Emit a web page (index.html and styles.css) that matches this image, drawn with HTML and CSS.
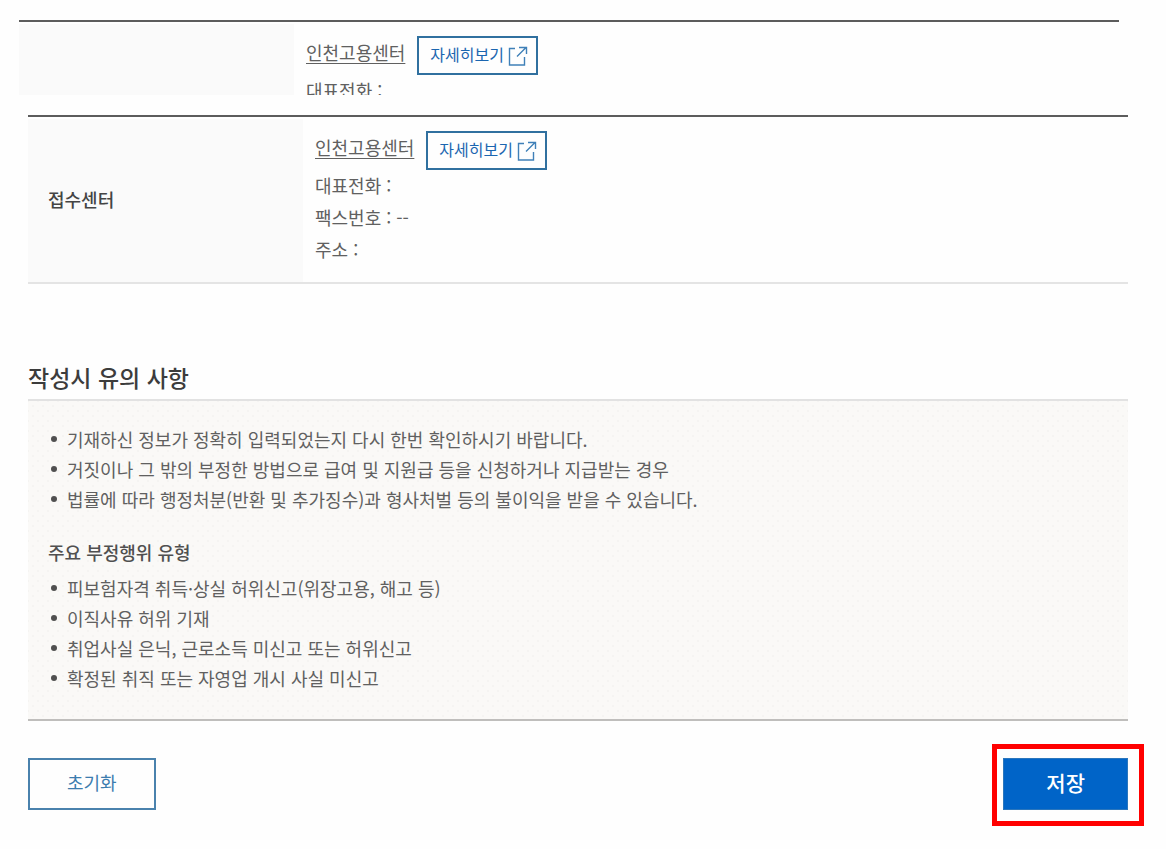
FILE: index.html
```html
<!DOCTYPE html>
<html lang="ko">
<head>
<meta charset="utf-8">
<meta name="viewport" content="width=device-width, initial-scale=1">
<title>접수센터</title>
<link rel="stylesheet" href="styles.css">
</head>
<body>
<svg class="defs" aria-hidden="true">
  <symbol id="open-icon" viewBox="0 0 20 20">
    <path d="M7 2.5H1.5V19H16.5V11" />
    <path d="M9 10.5L18 1.5M11 1.5H18.5V8" />
  </symbol>
</svg>
<div class="clip">
  <table class="info">
    <tbody>
      <tr>
        <th scope="row"></th>
        <td>
          <div class="center-row">
            <a class="center-name" href="#">인천고용센터</a>
            <button class="detail" type="button">자세히보기<svg class="icon" aria-hidden="true"><use href="#open-icon"/></svg></button>
          </div>
          <p class="line">대표전화 :</p>
        </td>
      </tr>
    </tbody>
  </table>
</div>
<main class="page">
  <table class="info full">
    <tbody>
      <tr>
        <th scope="row">접수센터</th>
        <td>
          <div class="center-row">
            <a class="center-name" href="#">인천고용센터</a>
            <button class="detail" type="button">자세히보기<svg class="icon" aria-hidden="true"><use href="#open-icon"/></svg></button>
          </div>
          <p class="line">대표전화 :</p>
          <p class="line">팩스번호 : --</p>
          <p class="line">주소 :</p>
        </td>
      </tr>
    </tbody>
  </table>
  <h2 class="title">작성시 유의 사항</h2>
  <section class="notice">
    <ul class="list">
      <li>기재하신 정보가 정확히 입력되었는지 다시 한번 확인하시기 바랍니다.</li>
      <li>거짓이나 그 밖의 부정한 방법으로 급여 및 지원급 등을 신청하거나 지급받는 경우</li>
      <li>법률에 따라 행정처분(반환 및 추가징수)과 형사처벌 등의 불이익을 받을 수 있습니다.</li>
    </ul>
    <h3 class="subtitle">주요 부정행위 유형</h3>
    <ul class="list">
      <li>피보험자격 취득·상실 허위신고(위장고용, 해고 등)</li>
      <li>이직사유 허위 기재</li>
      <li>취업사실 은닉, 근로소득 미신고 또는 허위신고</li>
      <li>확정된 취직 또는 자영업 개시 사실 미신고</li>
    </ul>
  </section>
  <div class="actions">
    <button class="btn reset" type="button">초기화</button>
    <div class="marked"><button class="btn save" type="button">저장</button></div>
  </div>
</main>
</body>
</html>
```
FILE: styles.css
```css
* {
  box-sizing: border-box;
}

body {
  margin: 0;
  padding-top: 20px;
  background: #fefefe;
  color: #606060;
  font-family: "Noto Sans CJK KR", sans-serif;
  font-size: 18px;
  line-height: 30px;
}

h2, h3, p, ul {
  margin: 0;
  padding: 0;
}

button {
  font-family: inherit;
  cursor: pointer;
}

.defs {
  position: absolute;
  width: 0;
  height: 0;
}

.clip {
  height: 75px;
  margin: 0 47px 20px 19px;
  overflow: hidden;
}

.page {
  padding: 0 38px 24px 28px;
}

.info {
  width: 100%;
  border-collapse: separate;
  border-spacing: 0;
  border-top: 2px solid #5c5c5c;
}

.full {
  border-bottom: 2px solid #e4e4e4;
}

.info th {
  width: 25%;
  padding: 0 20px 4px;
  border-top: 2px solid #fefefe;
  background: #fafafa;
  color: #444;
  font-weight: 500;
  text-align: left;
}

.info td {
  padding: 15px 12px 17px;
}

.center-row {
  display: flex;
  align-items: center;
  gap: 12px;
  height: 37px;
}

.center-name {
  color: #606060;
  line-height: 24px;
  text-decoration: underline;
  text-decoration-thickness: 1px;
  text-underline-offset: 3px;
  padding-bottom: 7px;
}

.detail {
  display: flex;
  align-items: center;
  gap: 4px;
  height: 39px;
  padding: 0 8px 4px 11px;
  border: 2px solid #30709f;
  background: #fefefe;
  color: #1b66b0;
  font-size: 16px;
  line-height: 24px;
}

.icon {
  width: 20px;
  height: 20px;
  margin-top: 5px;
  fill: none;
  stroke: #3f80b8;
  stroke-width: 1.4;
}

.line {
  line-height: 32px;
}

.title {
  margin-top: 75px;
  padding-bottom: 4px;
  color: #3c3c3c;
  font-size: 23px;
  font-weight: 500;
  line-height: 36px;
}

.notice {
  padding: 23px 20px 26px;
  border-top: 2px solid #e2e2e2;
  border-bottom: 2px solid #bfbebc;
  background-color: #faf9f7;
  background-image:
    radial-gradient(circle, #f5f4f2 1px, transparent 1px),
    radial-gradient(circle, #f5f4f2 1px, transparent 1px);
  background-position: 0 0, 5px 5px;
  background-size: 10px 10px;
}

.list {
  list-style: none;
}

.list li {
  display: flex;
  align-items: center;
  gap: 10px;
  padding-left: 3px;
}

.list li::before {
  content: "";
  flex: none;
  width: 6px;
  height: 6px;
  border-radius: 50%;
  background: #505050;
}

.subtitle {
  margin: 23px 0 6px;
  color: #505050;
  font-size: 18px;
  font-weight: 500;
}

.actions {
  display: flex;
  justify-content: space-between;
  margin-top: 37px;
}

.btn {
  height: 52px;
  padding: 0 37px 4px;
  border: 2px solid #4a82ad;
  font-size: 18px;
}

.reset {
  background: #fefefe;
  color: #3c7cae;
}

.marked {
  position: relative;
}

.marked::after {
  content: "";
  position: absolute;
  inset: -14px -16px -16px -11px;
  border: 5px solid #f00;
  pointer-events: none;
}

.save {
  padding: 0 42px 4px;
  border: 1px solid #2a76bd;
  background: #0064c8;
  color: #fff;
  font-size: 21px;
  font-weight: 500;
}
```
